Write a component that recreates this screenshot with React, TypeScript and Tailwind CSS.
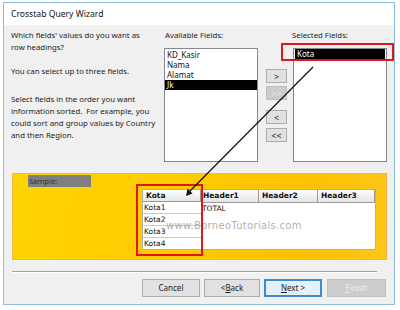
import React from 'react';

const font = "font-['Noto_Sans',sans-serif]";
const tableFont = "font-['DejaVu_Sans',sans-serif]";

const SideButton = ({ label, disabled }: { label: string; disabled?: boolean }) => (
  <div
    className={
      disabled
        ? 'w-[21px] h-[14px] flex items-center justify-center bg-[#cccccc] border border-[#bfbfbf] text-[#e6e6e6] text-[9px] leading-none'
        : 'w-[21px] h-[14px] flex items-center justify-center bg-[#e1e1e1] border border-[#adadad] text-[#222] text-[9px] leading-none'
    }
  >
    {label}
  </div>
);

const WizardButton = ({ children, width, primary, disabled }: { children: React.ReactNode; width: string; primary?: boolean; disabled?: boolean }) => {
  let cls = 'h-[18px] flex items-center justify-center text-[8px] ';
  if (disabled) cls += 'bg-[#cccccc] border border-[#bfbfbf] text-[#eeeeee]';
  else if (primary) cls += 'bg-[#e5f1fb] border-2 border-[#3c8bd0] text-[#222]';
  else cls += 'bg-[#e1e1e1] border border-[#adadad] text-[#222]';
  return <div className={cls + ' ' + width}>{children}</div>;
};

export default function App() {
  const kotaRows = ['Kota1', 'Kota2', 'Kota3', 'Kota4'];

  return (
    <div className={`relative w-[400px] h-[310px] bg-white overflow-hidden ${font}`}>
      <div className="ml-[3px] mt-[2px] w-[392px] h-[303px] border border-[#8cbbe0] flex flex-col">
        {/* title bar */}
        <div className="h-[22px] bg-white flex items-center pl-[7px] text-[8.6px] text-[#111]">
          Crosstab Query Wizard
        </div>

        {/* body */}
        <div className="flex-1 bg-[#f0f0f0] flex flex-col">
          <div className="h-[148px] flex pt-[4px]">
            <div className="w-[160px] pl-[7px] text-[7.8px] leading-[12px] text-[#222] whitespace-nowrap">
              <p>Which fields' values do you want as<br />row headings?</p>
              <p className="mt-[12px]">You can select up to three fields.</p>
              <p className="mt-[16px]">
                Select fields in the order you want<br />
                information sorted.&nbsp; For example, you<br />
                could sort and group values by Country<br />
                and then Region.
              </p>
            </div>

            <div className="w-[94px] flex flex-col">
              <div className="pl-[1px] text-[7.8px] leading-[12px] text-[#222]">Available Fields:</div>
              <div className="mt-[7px] h-[114px] bg-white border border-[#828790] text-[8px] leading-[10px] text-[#111] pt-[1px]">
                <div className="pl-[2px]">KD_Kasir</div>
                <div className="pl-[2px]">Nama</div>
                <div className="pl-[2px]">Alamat</div>
                <div className="pl-[2px] bg-black text-white">Jk</div>
              </div>
            </div>

            <div className="w-[21px] ml-[8px] pt-[40px] flex flex-col">
              <SideButton label=">" />
              <div className="mt-[3px]"><SideButton label=">>" disabled /></div>
              <div className="mt-[10px]"><SideButton label="<" /></div>
              <div className="mt-[4px]"><SideButton label="<<" /></div>
            </div>

            <div className="w-[94px] ml-[6px] flex flex-col">
              <div className="-ml-[1px] text-[7.8px] leading-[12px] text-[#222]">Selected Fields:</div>
              <div className="relative mt-[7px] h-[114px] bg-white border border-[#828790] text-[8px] leading-[10px] pt-[0px]">
                <div className="mx-[1px] pl-[2px] bg-black text-white">Kota</div>
                <div className="absolute -left-[13px] -top-[6px] w-[113px] h-[18px] border-2 border-[#e3141c]" />
              </div>
            </div>
          </div>

          {/* sample panel */}
          <div className="relative ml-[8px] w-[375px] h-[87px] border border-[#f0b84a] bg-[linear-gradient(100deg,#ffd400_0%,#ffcc00_45%,#ffc000_75%,#ffc61a_100%)]">
            <div className="ml-[15px] mt-[1px] w-[63px] h-[12px] bg-[#7f7f7f] text-[7.5px] leading-[12px] pl-[1px] text-[#333]">
              Sample:
            </div>

            <div className={`relative ml-[129px] mt-[2px] w-[234px] h-[61px] bg-white border border-[#b0b0b0] flex ${tableFont} text-[7.5px] text-[#111]`}>
              <div className="w-[58px] flex flex-col">
                <div className="h-[13px] flex items-center pl-[3px] font-bold bg-[linear-gradient(#ffffff,#e4e4e4)] border-r border-b border-[#9a9a9a]">Kota</div>
                {kotaRows.map((k) => (
                  <div key={k} className="h-[12px] flex items-center pl-[1px] border-b border-[#c8c8c8] last:border-b-0">{k}</div>
                ))}
              </div>
              <div className="w-[58px] flex flex-col">
                <div className="h-[13px] flex items-center pl-[2px] font-bold bg-[linear-gradient(#ffffff,#e4e4e4)] border-r border-b border-[#9a9a9a]">Header1</div>
                <div className="h-[12px] flex items-center pl-[1px]">TOTAL</div>
              </div>
              <div className="w-[59px]">
                <div className="h-[13px] flex items-center pl-[3px] font-bold bg-[linear-gradient(#ffffff,#e4e4e4)] border-r border-b border-[#9a9a9a]">Header2</div>
              </div>
              <div className="flex-1">
                <div className="h-[13px] flex items-center pl-[3px] font-bold bg-[linear-gradient(#ffffff,#e4e4e4)] border-r border-b border-[#9a9a9a]">Header3</div>
              </div>

              <div className="absolute left-[23px] top-[28px] text-[10px] tracking-[0.3px] text-[#9a9a9a]/80 font-['DejaVu_Sans',sans-serif]">
                www.BorneoTutorials.com
              </div>
              <div className="absolute -left-[7px] -top-[6px] w-[67px] h-[72px] border-2 border-[#e3141c]" />
            </div>
          </div>

          <div className="ml-[8px] mt-[11px] w-[365px] h-[2px] border-t border-[#a0a0a0] border-b border-b-white" />

          <div className="mt-[6px] flex pl-[138px] gap-[4px]">
            <WizardButton width="w-[58px]">Cancel</WizardButton>
            <WizardButton width="w-[56px]">&lt; <span className="underline">B</span>ack</WizardButton>
            <WizardButton width="w-[58px]" primary><span className="underline">N</span>ext &gt;</WizardButton>
            <div className="ml-[1px]">
              <WizardButton width="w-[59px]" disabled><span className="underline">F</span>inish</WizardButton>
            </div>
          </div>
        </div>
      </div>

      {/* annotation arrow */}
      <svg className="absolute left-0 top-0 pointer-events-none" width="400" height="310">
        <line x1="313" y1="67" x2="189" y2="192" stroke="#111" strokeWidth="1.2" />
        <polygon points="186,196 187.5,188.5 192.5,193.5" fill="#111" />
      </svg>
    </div>
  );
}
